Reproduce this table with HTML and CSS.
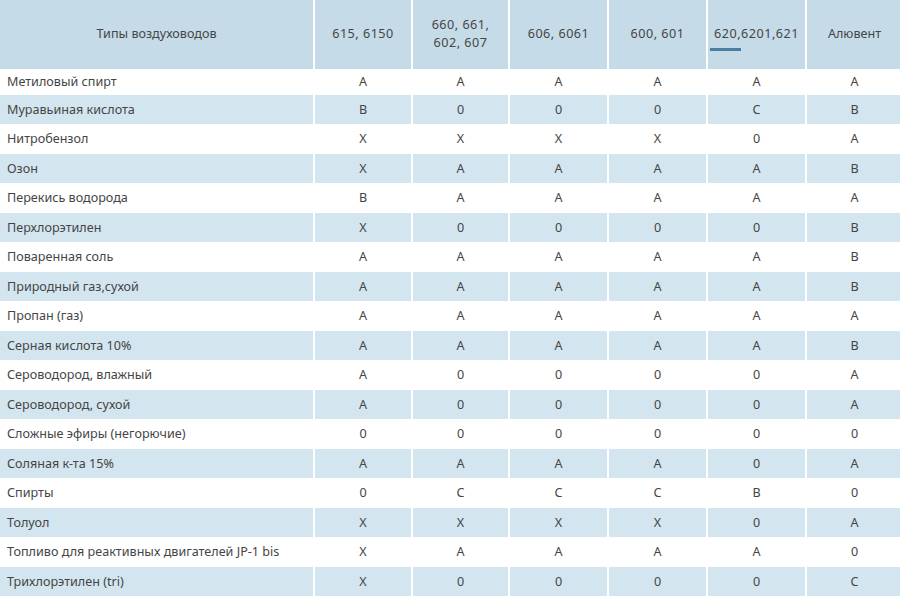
FILE: index.html
```html
<!DOCTYPE html>
<html lang="ru">
<head>
<meta charset="utf-8">
<title>Типы воздуховодов</title>
<link rel="stylesheet" href="styles.css">
</head>
<body>
<table class="chem">
  <colgroup>
    <col class="c-name"><col class="c-2"><col class="c-3"><col class="c-4"><col class="c-5"><col class="c-6"><col class="c-7">
  </colgroup>
  <thead>
    <tr>
      <th>Типы воздуховодов</th>
      <th>615, 6150</th>
      <th>660, 661,<br>602, 607</th>
      <th>606, 6061</th>
      <th>600, 601</th>
      <th><span class="marked">620,6201,621</span></th>
      <th>Алювент</th>
    </tr>
  </thead>
  <tbody>
    <tr class="first"><td>Метиловый спирт</td><td>A</td><td>A</td><td>A</td><td>A</td><td>A</td><td>A</td></tr>
    <tr><td>Муравьиная кислота</td><td>B</td><td>0</td><td>0</td><td>0</td><td>C</td><td>B</td></tr>
    <tr><td>Нитробензол</td><td>X</td><td>X</td><td>X</td><td>X</td><td>0</td><td>A</td></tr>
    <tr><td>Озон</td><td>X</td><td>A</td><td>A</td><td>A</td><td>A</td><td>B</td></tr>
    <tr><td>Перекись водорода</td><td>B</td><td>A</td><td>A</td><td>A</td><td>A</td><td>A</td></tr>
    <tr><td>Перхлорэтилен</td><td>X</td><td>0</td><td>0</td><td>0</td><td>0</td><td>B</td></tr>
    <tr><td>Поваренная соль</td><td>A</td><td>A</td><td>A</td><td>A</td><td>A</td><td>B</td></tr>
    <tr><td>Природный газ,сухой</td><td>A</td><td>A</td><td>A</td><td>A</td><td>A</td><td>B</td></tr>
    <tr><td>Пропан (газ)</td><td>A</td><td>A</td><td>A</td><td>A</td><td>A</td><td>A</td></tr>
    <tr><td>Серная кислота 10%</td><td>A</td><td>A</td><td>A</td><td>A</td><td>A</td><td>B</td></tr>
    <tr><td>Сероводород, влажный</td><td>A</td><td>0</td><td>0</td><td>0</td><td>0</td><td>A</td></tr>
    <tr><td>Сероводород, сухой</td><td>A</td><td>0</td><td>0</td><td>0</td><td>0</td><td>A</td></tr>
    <tr><td>Сложные эфиры (негорючие)</td><td>0</td><td>0</td><td>0</td><td>0</td><td>0</td><td>0</td></tr>
    <tr><td>Соляная к-та 15%</td><td>A</td><td>A</td><td>A</td><td>A</td><td>0</td><td>A</td></tr>
    <tr><td>Спирты</td><td>0</td><td>C</td><td>C</td><td>C</td><td>B</td><td>0</td></tr>
    <tr><td>Толуол</td><td>X</td><td>X</td><td>X</td><td>X</td><td>0</td><td>A</td></tr>
    <tr><td>Топливо для реактивных двигателей JP-1 bis</td><td>X</td><td>A</td><td>A</td><td>A</td><td>A</td><td>0</td></tr>
    <tr><td>Трихлорэтилен (tri)</td><td>X</td><td>0</td><td>0</td><td>0</td><td>0</td><td>C</td></tr>
  </tbody>
</table>
</body>
</html>
```
FILE: styles.css
```css
html, body {
  margin: 0;
  padding: 0;
  background: #ffffff;
  overflow: hidden;
}

body {
  font-family: "Noto Sans", "Open Sans", "DejaVu Sans", sans-serif;
  font-size: 12.6px;
  color: #454545;
}

.chem {
  border-collapse: separate;
  border-spacing: 2px 0;
  margin: 0 0 0 -2px;
  table-layout: fixed;
  width: 906px;
}

.c-name { width: 313px; }
.c-2 { width: 96px; }
.c-3 { width: 95px; }
.c-4 { width: 97px; }
.c-5 { width: 97px; }
.c-6 { width: 97px; }
.c-7 { width: 95px; }

.chem th {
  background: #c5dbe8;
  font-weight: normal;
  height: 68.5px;
  padding: 0;
  text-align: center;
  vertical-align: middle;
  line-height: 18px;
}

.chem td {
  height: 29.5px;
  padding: 0;
  text-align: center;
  vertical-align: middle;
  line-height: 18px;
}

.chem tbody tr.first td {
  height: 26.4px;
}

.chem td:first-child {
  text-align: left;
  padding-left: 7px;
}

.chem tbody tr:nth-child(even) td {
  background: #d3e5ef;
}

.chem thead th:nth-child(n+2) {
  letter-spacing: 0.5px;
}

.chem thead th:last-child {
  letter-spacing: 0;
}

.marked {
  position: relative;
  display: inline-block;
}

.marked::after {
  content: "";
  position: absolute;
  left: -4px;
  top: 23px;
  width: 31px;
  height: 3px;
  background: #4a7fa0;
}
```
